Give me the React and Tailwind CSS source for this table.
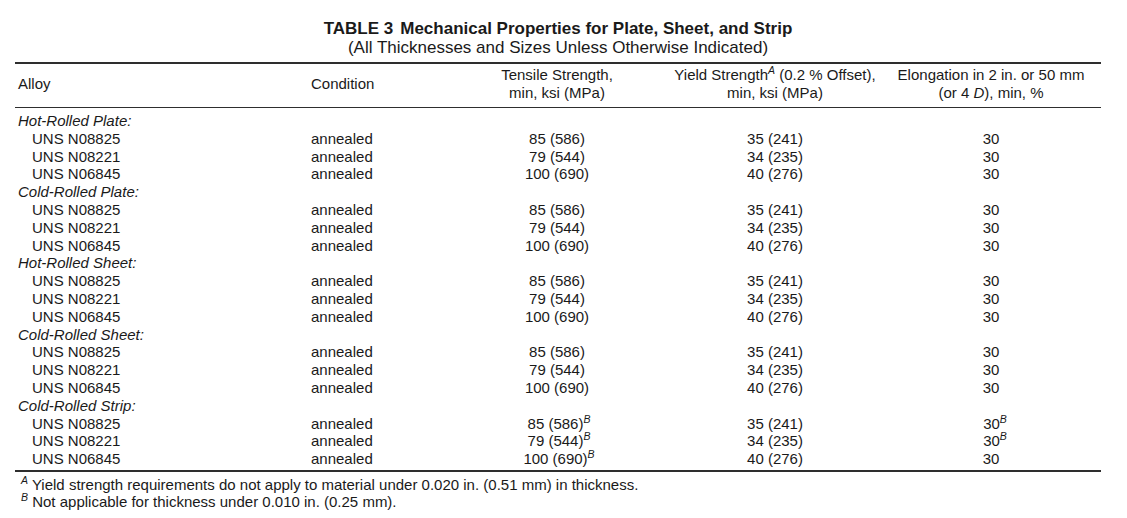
import React from "react";

const groups = [
  { name: "Hot-Rolled Plate:", strip: false },
  { name: "Cold-Rolled Plate:", strip: false },
  { name: "Hot-Rolled Sheet:", strip: false },
  { name: "Cold-Rolled Sheet:", strip: false },
  { name: "Cold-Rolled Strip:", strip: true },
];

const alloys = [
  { uns: "UNS N08825", tensile: "85 (586)", yieldS: "35 (241)", elong: "30" },
  { uns: "UNS N08221", tensile: "79 (544)", yieldS: "34 (235)", elong: "30" },
  { uns: "UNS N06845", tensile: "100 (690)", yieldS: "40 (276)", elong: "30" },
];

// superscript that doesn't push the line box
const Sup = ({ children }) => (
  <span className="italic text-[10.5px] leading-none relative -top-[6px]">{children}</span>
);

const cols = "grid grid-cols-[296px_149px_194px_242px_190px_1fr]";

export default function App() {
  return (
    <div className="w-[1127px] h-[518px] bg-white text-[#1a1a1a] font-['Liberation_Sans',Arial,sans-serif] overflow-hidden">
      <div className="ml-[15px] w-[1086px]">
        <div className="pt-[19px] text-center">
          <div className="font-bold text-[17px] leading-[19px]">
            TABLE 3<span className="ml-[7px]">Mechanical Properties for Plate, Sheet, and Strip</span>
          </div>
          <div className="text-[17px] leading-[19px]">(All Thicknesses and Sizes Unless Otherwise Indicated)</div>
        </div>

        <div className="mt-[5px] text-[15px]">
          {/* header */}
          <div className={`${cols} border-t-2 border-b border-[#2e2e2e] pt-[2px] pb-[5px] leading-[18px] items-center`}>
            <div className="pl-[3px]">Alloy</div>
            <div>Condition</div>
            <div className="text-center">
              Tensile Strength,
              <br />
              min, ksi (MPa)
            </div>
            <div className="text-center whitespace-nowrap">
              Yield Strength<Sup>A</Sup> (0.2 % Offset),
              <br />
              min, ksi (MPa)
            </div>
            <div className="text-center whitespace-nowrap">
              Elongation in 2 in. or 50 mm
              <br />
              (or 4 <span className="italic">D</span>), min, %
            </div>
            <div />
          </div>

          {/* body */}
          <div className="border-b-2 border-[#2e2e2e] pt-[4px] pb-[2px] leading-[17.8px]">
            {groups.map((g) => (
              <div key={g.name}>
                <div className="pl-[3px] italic">{g.name}</div>
                {alloys.map((a, i) => (
                  <div key={a.uns} className={cols}>
                    <div className="pl-[17px]">{a.uns}</div>
                    <div>annealed</div>
                    <div className="text-center">
                      {g.strip ? (
                        <span className="pl-[4px]">
                          {a.tensile}
                          <Sup>B</Sup>
                        </span>
                      ) : (
                        a.tensile
                      )}
                    </div>
                    <div className="text-center">{a.yieldS}</div>
                    <div className="text-center">
                      {g.strip && i < 2 ? (
                        <span className="pl-[8px]">
                          {a.elong}
                          <Sup>B</Sup>
                        </span>
                      ) : (
                        a.elong
                      )}
                    </div>
                    <div />
                  </div>
                ))}
              </div>
            ))}
          </div>

          {/* footnotes */}
          <div className="pt-[4px] pl-[6px] leading-[17px]">
            <div>
              <Sup>A</Sup> Yield strength requirements do not apply to material under 0.020 in. (0.51 mm) in thickness.
            </div>
            <div>
              <Sup>B</Sup> Not applicable for thickness under 0.010 in. (0.25 mm).
            </div>
          </div>
        </div>
      </div>
    </div>
  );
}
